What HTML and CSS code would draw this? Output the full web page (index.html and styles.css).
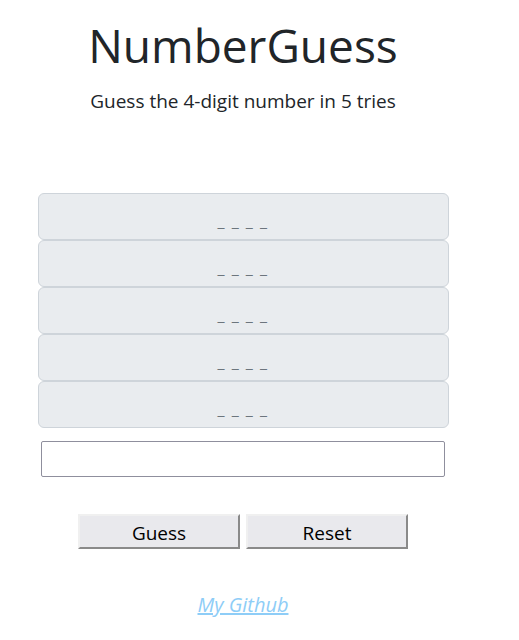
FILE: index.html
```html
<!DOCTYPE html>
<html>
<head>
<meta charset="utf-8">
<link rel="stylesheet" href="styles.css">
</head>
<body>
<div class="app">
  <h1 class="title">NumberGuess</h1>
  <p class="subtitle">Guess the 4-digit number in 5 tries</p>
  <div class="board">
    <div class="row"><span class="slots">_ _ _ _</span></div>
    <div class="row"><span class="slots">_ _ _ _</span></div>
    <div class="row"><span class="slots">_ _ _ _</span></div>
    <div class="row"><span class="slots">_ _ _ _</span></div>
    <div class="row"><span class="slots">_ _ _ _</span></div>
  </div>
  <input class="entry" type="text">
  <div class="actions">
    <button class="btn">Guess</button>
    <button class="btn">Reset</button>
  </div>
  <a class="link" href="#">My Github</a>
</div>
</body>
</html>
```
FILE: styles.css
```css
* { box-sizing: border-box; }
body {
  margin: 0;
  background: #fff;
  font-family: "Open Sans", "Noto Sans", sans-serif;
  color: #212529;
}
.app {
  width: 486px;
  display: flex;
  flex-direction: column;
  align-items: center;
}
.title {
  margin: 14px 0 0;
  font-size: 46px;
  font-weight: 400;
  line-height: 62px;
}
.subtitle {
  margin: 12px 0 0;
  font-size: 19px;
  line-height: 26px;
}
.board {
  margin-top: 79px;
  width: 411px;
  display: flex;
  flex-direction: column;
}
.row {
  height: 47px;
  background: #e9ecef;
  border: 1px solid #ced4da;
  border-radius: 6px;
  display: flex;
  justify-content: center;
  align-items: flex-end;
  padding-bottom: 8px;
}
.slots {
  font-size: 16px;
  color: #6c757d;
  line-height: 20px;
  letter-spacing: 1.5px;
}
.entry {
  margin-top: 13px;
  width: 404px;
  height: 36px;
  border: 1px solid #8f8f9d;
  border-radius: 2px;
  background: #fff;
}
.actions {
  margin-top: 37px;
  display: flex;
  gap: 6px;
}
.btn {
  width: 162px;
  height: 35px;
  background: #e9e9ed;
  border: 2px solid;
  border-color: #f0f0f0 #8a8a8a #8a8a8a #f0f0f0;
  font-family: "Open Sans", "Noto Sans", sans-serif;
  font-size: 19px;
  color: #000;
  padding: 2px 0 0;
}
.link {
  margin-top: 42px;
  font-size: 20px;
  font-style: italic;
  color: #8ecdf7;
  text-decoration: underline;
}
```
